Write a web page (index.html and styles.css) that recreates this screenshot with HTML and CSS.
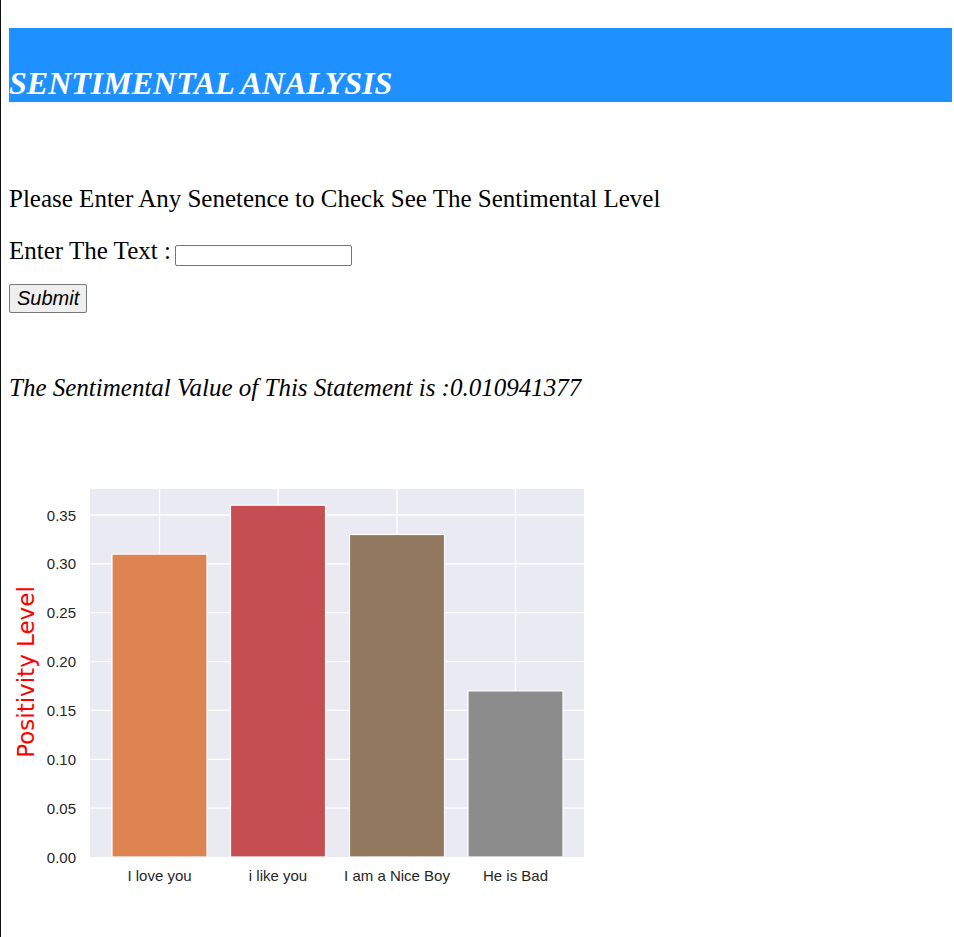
FILE: index.html
```html
<!DOCTYPE html>
<html lang="en">
<head>
<meta charset="utf-8">
<title>Sentimental Analysis</title>
<link rel="stylesheet" href="styles.css">
</head>
<body>
<h1 class="banner">SENTIMENTAL ANALYSIS</h1>
<form class="form">
  <p class="intro">Please Enter Any Senetence to Check See The Sentimental Level</p>
  <p class="field">Enter The Text : <input class="text-input" type="text" name="text"></p>
  <button class="submit" type="button">Submit</button>
</form>
<p class="result">The Sentimental Value of This Statement is :0.010941377</p>
<svg class="chart" width="590" height="440" viewBox="0 0 590 440" xmlns="http://www.w3.org/2000/svg">
  <rect class="plot-bg" x="81" y="29" width="494" height="368"/>
  <g class="grid">
    <line x1="81" x2="575" y1="348.14" y2="348.14"/>
    <line x1="81" x2="575" y1="299.29" y2="299.29"/>
    <line x1="81" x2="575" y1="250.43" y2="250.43"/>
    <line x1="81" x2="575" y1="201.57" y2="201.57"/>
    <line x1="81" x2="575" y1="152.71" y2="152.71"/>
    <line x1="81" x2="575" y1="103.86" y2="103.86"/>
    <line x1="81" x2="575" y1="55" y2="55"/>
    <line x1="150.5" x2="150.5" y1="29" y2="397"/>
    <line x1="269" x2="269" y1="29" y2="397"/>
    <line x1="388" x2="388" y1="29" y2="397"/>
    <line x1="506.5" x2="506.5" y1="29" y2="397"/>
  </g>
  <g class="bars">
    <rect x="103" y="94.1" width="95" height="302.9" fill="#dd8452"/>
    <rect x="221.5" y="45.2" width="95" height="351.8" fill="#c44e52"/>
    <rect x="340.5" y="74.5" width="95" height="322.5" fill="#937860"/>
    <rect x="459" y="230.9" width="95" height="166.1" fill="#8c8c8c"/>
  </g>
  <g class="yticks">
    <text x="67" y="402.5">0.00</text>
    <text x="67" y="353.6">0.05</text>
    <text x="67" y="304.8">0.10</text>
    <text x="67" y="255.9">0.15</text>
    <text x="67" y="207.1">0.20</text>
    <text x="67" y="158.2">0.25</text>
    <text x="67" y="109.4">0.30</text>
    <text x="67" y="60.5">0.35</text>
  </g>
  <g class="xticks">
    <text x="150.5" y="421">I love you</text>
    <text x="269" y="421">i like you</text>
    <text x="388" y="421">I am a Nice Boy</text>
    <text x="506.5" y="421">He is Bad</text>
  </g>
  <text class="ylabel" x="25" y="212" transform="rotate(-90 25 212)">Positivity Level</text>
</svg>
</body>
</html>
```
FILE: styles.css
```css
html {
  border-left: 1px solid #111;
  background: #fff;
  min-height: 100%;
  box-sizing: border-box;
}

body {
  margin: 0;
  padding: 0 2px 0 8px;
  font-family: "Liberation Serif", "Times New Roman", serif;
  color: #000;
}

.banner {
  margin: 28px 0 0;
  padding: 37px 0 0;
  background: #1e90ff;
  color: #fff;
  font-family: "Liberation Serif", "Times New Roman", serif;
  font-size: 32px;
  font-weight: bold;
  font-style: italic;
  line-height: 37px;
}

.form {
  margin: 0;
}

.intro {
  margin: 83px 0 0;
  font-size: 25px;
}

.field {
  margin: 24px 0 0;
  font-size: 25px;
}

.text-input {
  width: 177px;
  height: 21px;
  box-sizing: border-box;
  border: 1px solid #767676;
  border-radius: 2px;
  padding: 1px 2px;
  font-size: 13px;
  margin: 0 0 0 -2px;
  vertical-align: -1px;
}

.submit {
  display: block;
  margin: 18px 0 0;
  height: 29px;
  padding: 0 7px;
  box-sizing: border-box;
  border: 1px solid #767676;
  border-radius: 2px;
  background: #efefef;
  font-family: "Liberation Sans", Arial, sans-serif;
  font-size: 20px;
  font-style: italic;
  color: #000;
}

.result {
  margin: 61px 0 0;
  font-size: 25px;
  font-style: italic;
}

.chart {
  display: block;
  margin-top: 58px;
}

.plot-bg {
  fill: #eaeaf2;
}

.grid line {
  stroke: #fff;
  stroke-width: 1.3;
}

.bars rect {
  stroke: #fff;
  stroke-width: 1.2;
}

.yticks text,
.xticks text {
  font-family: "Liberation Sans", Arial, sans-serif;
  font-size: 15px;
  fill: #262626;
}

.yticks text {
  text-anchor: end;
}

.xticks text {
  text-anchor: middle;
}

.ylabel {
  font-family: "DejaVu Sans", sans-serif;
  font-size: 23px;
  fill: #ff0000;
  text-anchor: middle;
}
```
